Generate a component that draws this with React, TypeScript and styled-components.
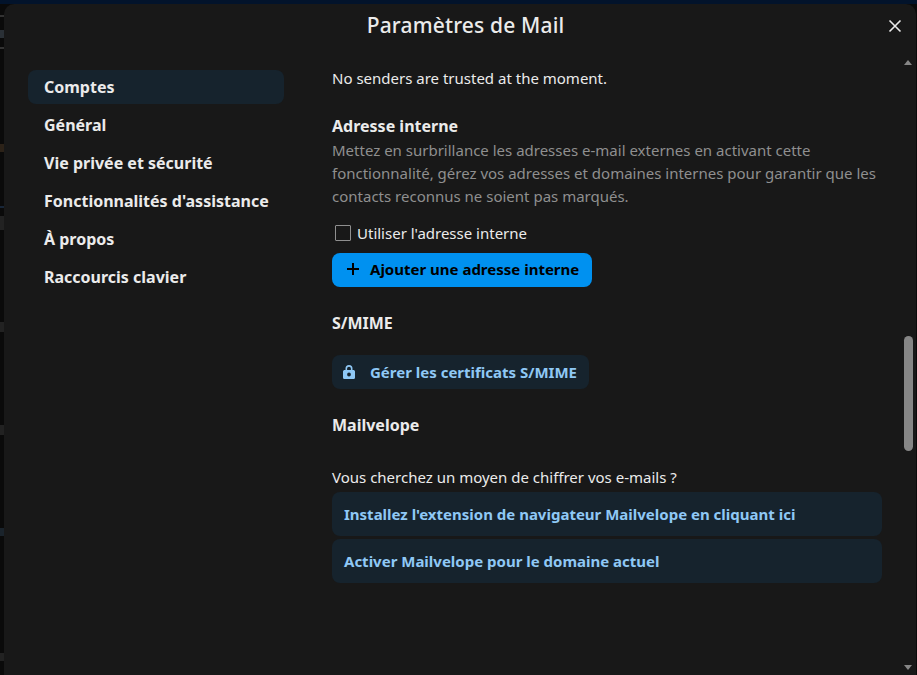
import React from "react";
import styled, { createGlobalStyle } from "styled-components";

const GlobalStyles = createGlobalStyle`
    html, body {
        margin: 0;
        height: 100%;
        background: #0a0a0a;
        overflow: hidden;
    }
    #root {
        height: 100%;
    }
`;

const Backdrop = styled.div`
    position: relative;
    box-sizing: border-box;
    height: 675px;
    padding: 4px 1px 0 4px;
    background: linear-gradient(#02132b 0, #02132b 4px, #0a0a0a 4px);
    font-family: "Noto Sans", sans-serif;
    overflow: hidden;
`;

// bits of the page behind the dialog that still show in the left gutter
const Scrap = styled.span<{ $top: number; $height: number; $color: string }>`
    position: absolute;
    left: 0;
    top: ${(p) => p.$top}px;
    width: 4px;
    height: ${(p) => p.$height}px;
    background: ${(p) => p.$color};
`;

const Modal = styled.div`
    position: relative;
    height: 100%;
    background: #181818;
    border-radius: 10px 10px 0 0;
    display: flex;
    flex-direction: column;
    overflow: hidden;
`;

const Title = styled.h2`
    margin: 0;
    padding: 7px 0 0 11px;
    height: 47px;
    box-sizing: border-box;
    text-align: center;
    font-size: 21px;
    line-height: 29px;
    font-weight: 500;
    letter-spacing: 0.17px;
    color: #ebebeb;
`;

const CloseButton = styled.button`
    position: absolute;
    top: 10px;
    right: 9px;
    width: 24px;
    height: 24px;
    padding: 0;
    border: 0;
    background: none;
    display: flex;
    align-items: center;
    justify-content: center;
`;

const Body = styled.div`
    flex: 1;
    display: flex;
    min-height: 0;
`;

const Nav = styled.nav`
    width: 256px;
    margin-left: 24px;
    padding-top: 19px;
    display: flex;
    flex-direction: column;
    gap: 4px;
`;

const NavItem = styled.div<{ $active?: boolean }>`
    height: 34px;
    padding-left: 16px;
    border-radius: 8px;
    background: ${(p) => (p.$active ? "#16232d" : "transparent")};
    color: #ebebeb;
    font-size: 16px;
    font-weight: 700;
    line-height: 34px;
`;

const Content = styled.main`
    width: 550px;
    margin-left: 48px;
    padding-top: 16px;
`;

const Plain = styled.p`
    margin: 0;
    font-size: 15px;
    line-height: 22px;
    color: #ebebeb;
`;

const Section = styled.section<{ $top: number }>`
    margin-top: ${(p) => p.$top}px;
`;

const Heading = styled.h3`
    margin: 0;
    font-size: 16px;
    line-height: 25px;
    font-weight: 700;
    color: #ebebeb;
`;

const Hint = styled.p`
    margin: 0;
    width: 548px;
    font-size: 15px;
    line-height: 23px;
    color: #8f8f8f;
`;

const CheckRow = styled.label`
    display: flex;
    align-items: center;
    gap: 6px;
    margin: 14px 0 0 3px;
    height: 22px;
    font-size: 15px;
    line-height: 22px;
    color: #ebebeb;
`;

const CheckBox = styled.span`
    box-sizing: border-box;
    width: 16px;
    height: 16px;
    border: 1px solid #8f8f8f;
    border-radius: 1px;
`;

const Button = styled.button<{ $primary?: boolean }>`
    display: flex;
    align-items: center;
    height: 34px;
    padding: 0 ${(p) => (p.$primary ? 13 : 12)}px ${(p) => (p.$primary ? 2 : 0)}px 8px;
    border: 0;
    border-radius: 8px;
    background: ${(p) => (p.$primary ? "#0091f0" : "#16232d")};
    color: ${(p) => (p.$primary ? "#000" : "#8fc8f5")};
    font-family: inherit;
    font-size: 15px;
    font-weight: 700;
    white-space: nowrap;
`;

const ButtonIcon = styled.span`
    width: 26px;
    margin-right: 4px;
    display: flex;
    justify-content: center;
`;

const LockIcon = styled.svg`
    margin-right: 8px;
`;

const LinkButton = styled.div`
    box-sizing: border-box;
    width: 550px;
    height: 44px;
    padding-left: 12px;
    border-radius: 8px;
    background: #16232d;
    color: #8fc8f5;
    font-size: 15px;
    font-weight: 700;
    line-height: 44px;
`;

const LinkStack = styled.div`
    display: flex;
    flex-direction: column;
    gap: 3px;
    margin-top: 4px;
`;

const Track = styled.div`
    position: absolute;
    top: 52px;
    right: 0;
    bottom: 0;
    width: 12px;
`;

const Arrow = styled.span<{ $down?: boolean }>`
    position: absolute;
    left: 0;
    ${(p) => (p.$down ? "bottom: 5px;" : "top: 4px;")}
    width: 0;
    height: 0;
    border-left: 4.5px solid transparent;
    border-right: 4.5px solid transparent;
    ${(p) => (p.$down ? "border-top" : "border-bottom")}: 5px solid #868686;
`;

const Thumb = styled.div`
    position: absolute;
    left: 0;
    top: 280px;
    width: 9px;
    height: 115px;
    border-radius: 5px;
    background: #868686;
`;

const scraps = [
    { top: 15, height: 2, color: "#333333" },
    { top: 30, height: 8, color: "#2a3036" },
    { top: 47, height: 2, color: "#333333" },
    { top: 144, height: 8, color: "#2c2218" },
    { top: 206, height: 2, color: "#182638" },
    { top: 216, height: 14, color: "#222222" },
    { top: 322, height: 10, color: "#222222" },
    { top: 425, height: 10, color: "#222222" },
    { top: 528, height: 8, color: "#1a232b" },
    { top: 653, height: 8, color: "#222222" },
];

export default function App() {
    return (
        <>
            <GlobalStyles />
            <Backdrop>
                {scraps.map((s) => (
                    <Scrap key={s.top} $top={s.top} $height={s.height} $color={s.color} />
                ))}
                <Modal>
                    <Title>Paramètres de Mail</Title>
                    <CloseButton aria-label="Fermer">
                        <svg width="14" height="14" viewBox="0 0 14 14" fill="none" stroke="#ebebeb" strokeWidth="1.6">
                            <path d="M1.5 1.5l11 11M12.5 1.5l-11 11" />
                        </svg>
                    </CloseButton>
                    <Body>
                        <Nav>
                            <NavItem $active>Comptes</NavItem>
                            <NavItem>Général</NavItem>
                            <NavItem>Vie privée et sécurité</NavItem>
                            <NavItem>Fonctionnalités d'assistance</NavItem>
                            <NavItem>À propos</NavItem>
                            <NavItem>Raccourcis clavier</NavItem>
                        </Nav>
                        <Content>
                            <Plain>No senders are trusted at the moment.</Plain>
                            <Section $top={25}>
                                <Heading>Adresse interne</Heading>
                                <Hint>
                                    Mettez en surbrillance les adresses e-mail externes en activant cette
                                    fonctionnalité, gérez vos adresses et domaines internes pour garantir que les
                                    contacts reconnus ne soient pas marqués.
                                </Hint>
                                <CheckRow>
                                    <CheckBox />
                                    Utiliser l'adresse interne
                                </CheckRow>
                                <Section $top={9}>
                                    <Button $primary>
                                        <ButtonIcon>
                                            <svg width="14" height="14" viewBox="0 0 14 14" fill="none" stroke="#000" strokeWidth="2">
                                                <path d="M7 1v12M1 7h12" />
                                            </svg>
                                        </ButtonIcon>
                                        Ajouter une adresse interne
                                    </Button>
                                </Section>
                            </Section>
                            <Section $top={24}>
                                <Heading>S/MIME</Heading>
                            </Section>
                            <Section $top={19}>
                                <Button>
                                    <ButtonIcon>
                                        <LockIcon width="12" height="14" viewBox="0 0 12 14" fill="#8fc8f5">
                                            <path d="M2.5 5V3.6a3.5 3.5 0 0 1 7 0V5h.8c.9 0 1.7.7 1.7 1.6v5.8c0 .9-.8 1.6-1.7 1.6H1.7C.8 14 0 13.3 0 12.4V6.6C0 5.7.8 5 1.7 5zm1.6 0h3.8V3.6a1.9 1.9 0 0 0-3.8 0zM6 11.4a1.9 1.9 0 1 0 0-3.8 1.9 1.9 0 0 0 0 3.8z" />
                                        </LockIcon>
                                    </ButtonIcon>
                                    Gérer les certificats S/MIME
                                </Button>
                            </Section>
                            <Section $top={24}>
                                <Heading>Mailvelope</Heading>
                            </Section>
                            <Section $top={28}>
                                <Plain>Vous cherchez un moyen de chiffrer vos e-mails ?</Plain>
                                <LinkStack>
                                    <LinkButton>Installez l'extension de navigateur Mailvelope en cliquant ici</LinkButton>
                                    <LinkButton>Activer Mailvelope pour le domaine actuel</LinkButton>
                                </LinkStack>
                            </Section>
                        </Content>
                    </Body>
                    <Track>
                        <Arrow />
                        <Thumb />
                        <Arrow $down />
                    </Track>
                </Modal>
            </Backdrop>
        </>
    );
}
